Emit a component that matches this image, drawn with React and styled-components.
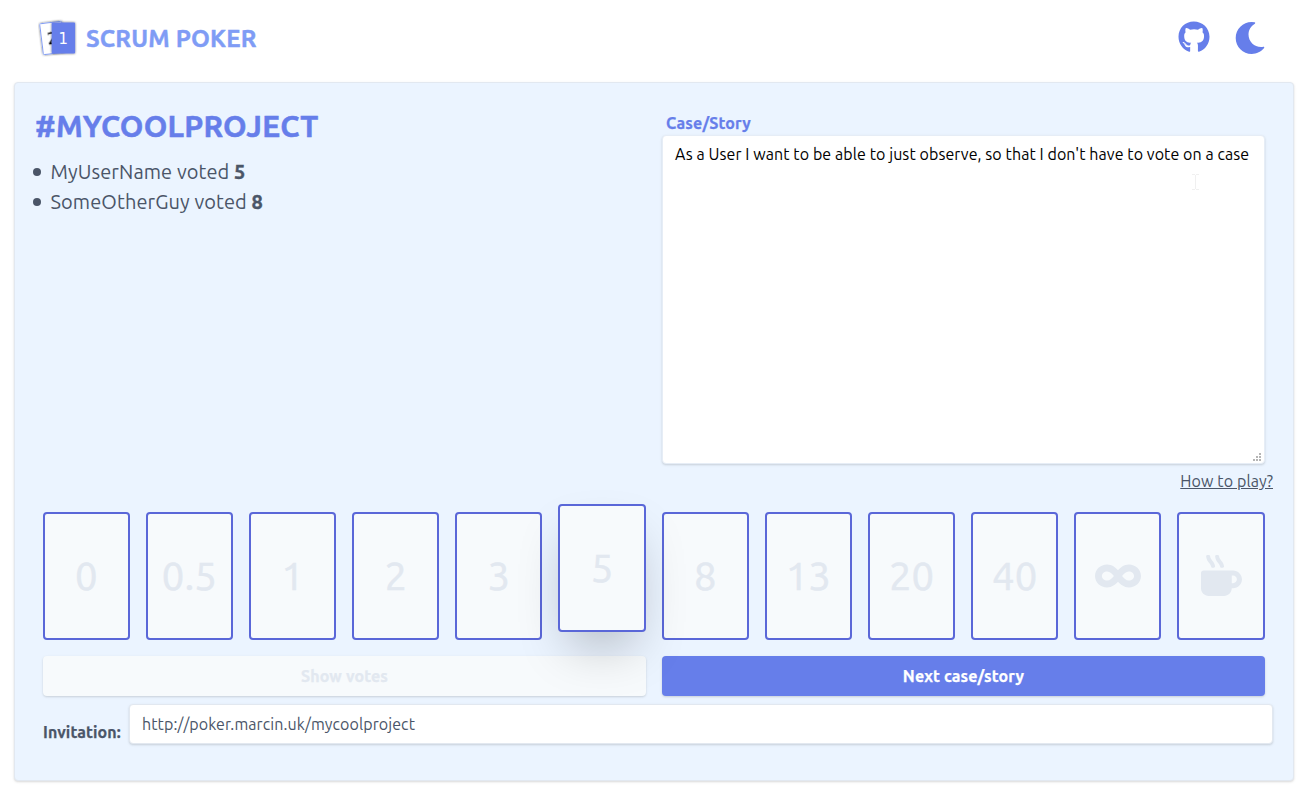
import React from 'react';
import styled, { createGlobalStyle } from 'styled-components';
import { FaGithub, FaMoon, FaInfinity, FaMugHot } from 'react-icons/fa';

const GlobalStyle = createGlobalStyle`
  *, *::before, *::after { box-sizing: border-box; }
  body {
    margin: 0;
    background: #fff;
    color: #4a5568;
    font: 16px/24px Ubuntu, 'Noto Sans', 'Open Sans', sans-serif;
  }
  button, input, textarea { font: inherit; margin: 0; border: 0; outline: 0; }
`;

const shadow = '0 1px 3px 0 rgba(0, 0, 0, 0.1), 0 1px 2px 0 rgba(0, 0, 0, 0.06)';

const Page = styled.div`
  height: 794px;
  padding: 0 10px 13px 14px;
  display: flex;
  flex-direction: column;
`;

const Header = styled.header`
  height: 82px;
  padding: 0 28px 0 24px;
  display: flex;
  align-items: flex-start;
  justify-content: space-between;
`;

const Brand = styled.a`
  display: flex;
  gap: 8px;
  padding-top: 18px;
`;

const Logo = styled.svg`
  width: 40px;
  height: 40px;
`;

const BrandName = styled.span`
  margin-top: 5px;
  color: #7f9cf5;
  font-size: 24px;
  font-weight: 700;
  line-height: 32px;
  letter-spacing: 0.2px;
  -webkit-text-stroke: 0.4px;
`;

const HeaderLinks = styled.nav`
  display: flex;
  gap: 24px;
  padding-top: 21px;
  font-size: 32px;
  color: #667eea;

  svg { display: block; }
  svg + svg { margin-top: 1px; }
`;

const Panel = styled.main`
  flex: 1;
  padding: 20px;
  background: #ebf4ff;
  border: 1px solid #e2e8f0;
  border-radius: 4px;
  box-shadow: ${shadow};
`;

const Board = styled.section`
  height: 361px;
  display: grid;
  grid-template-columns: 1fr 1fr;
`;

const Title = styled.h1`
  margin: 3px 0 11px;
  color: #667eea;
  font-size: 30px;
  font-weight: 700;
  line-height: 40px;
  letter-spacing: 0.25px;
  -webkit-text-stroke: 0.5px;
`;

const Votes = styled.ul`
  margin: 0;
  padding: 0 0 0 15.5px;
  font-size: 20px;
  line-height: 30px;
  letter-spacing: 0.09px;
  list-style: none;
`;

const Vote = styled.li`
  display: flex;
  align-items: center;
  white-space: pre;

  &::before {
    content: '';
    width: 8px;
    height: 8px;
    margin: 0 10px 0 -18px;
    border-radius: 50%;
    background: currentColor;
  }

  b { -webkit-text-stroke: 0.4px; }
`;

const Story = styled.div`
  padding: 8px 8px 0;
  display: flex;
  flex-direction: column;
`;

const StoryLabel = styled.label`
  height: 24px;
  padding-left: 4px;
  color: #667eea;
  font-weight: 700;
  letter-spacing: 0.15px;
  -webkit-text-stroke: 0.25px;
`;

const StoryText = styled.textarea`
  height: 329px;
  padding: 8px 0 0 12px;
  border: 1px solid #e6edf6;
  border-radius: 4px;
  background: #fff;
  box-shadow: ${shadow};
  color: #000;
  line-height: 20px;
  letter-spacing: 0.08px;
  resize: none;
`;

const StoryField = styled.div`
  position: relative;
  display: grid;
`;

const Grip = styled.svg`
  position: absolute;
  right: 4px;
  bottom: 3px;
  width: 8px;
  height: 8px;
  fill: #b5b5b5;
`;

const Caret = styled.svg`
  position: absolute;
  right: 66px;
  top: 39px;
  width: 7px;
  height: 16px;
  stroke: #f0f0f0;
  fill: none;
`;

const Help = styled.div`
  margin-top: 5px;
  height: 43px;
  text-align: right;
`;

const HelpLink = styled.a`
  text-decoration: underline;
  letter-spacing: 0.12px;
`;

const Deck = styled.div`
  display: grid;
  grid-template-columns: repeat(12, 1fr);
  gap: 16px;
  padding: 0 8.4px 0 7.6px;
`;

const Card = styled.button`
  position: relative;
  height: 128px;
  padding: 0;
  display: flex;
  align-items: center;
  justify-content: center;
  border: 2px solid #5a67d8;
  border-radius: 4px;
  background: #f7fafc;
  color: #e2e8f0;
  font-size: 40px;
  -webkit-text-stroke: 0.6px;
  z-index: ${(p) => (p.$picked ? 1 : 0)};
  top: ${(p) => (p.$picked ? '-8px' : '0')};
  box-shadow: ${(p) => (p.$picked ? '0 25px 50px -12px rgba(0, 0, 0, 0.25)' : 'none')};
`;

const CardIcon = styled.span`
  display: flex;
  font-size: ${(p) => p.$size}px;
  margin-top: ${(p) => p.$shift}px;
`;

const Actions = styled.div`
  display: grid;
  grid-template-columns: 1fr 1fr;
  gap: 16px;
  padding: 16px 8px 8px;
`;

const Action = styled.button`
  height: 40px;
  border-radius: 4px;
  background: ${(p) => (p.$primary ? '#667eea' : '#f7fafc')};
  color: ${(p) => (p.$primary ? '#fff' : '#e2e8f0')};
  box-shadow: ${shadow};
  font-weight: 700;
  letter-spacing: 0.14px;
  -webkit-text-stroke: 0.25px;
`;

const Invitation = styled.div`
  display: flex;
  padding-left: 8px;
`;

const InvitationLabel = styled.label`
  width: 86px;
  padding-top: 16px;
  font-weight: 700;
  letter-spacing: 0.1px;
  -webkit-text-stroke: 0.25px;
`;

const InvitationLink = styled.input`
  flex: 1;
  min-width: 0;
  height: 40px;
  padding: 0 12px;
  border: 1px solid #e2e8f0;
  border-radius: 4px;
  background: #fff;
  box-shadow: ${shadow};
  color: #4a5568;
  letter-spacing: 0.08px;
`;

const LogoCards = () => (
  <Logo viewBox="0 0 40 40">
    <defs>
      <filter id="soft" x="-20%" y="-20%" width="140%" height="140%">
        <feDropShadow dx="0" dy="0" stdDeviation="0.9" floodColor="#000" floodOpacity="0.6" />
      </filter>
    </defs>
    <g filter="url(#soft)" transform="rotate(-7 14 20)">
      <rect x="3.5" y="4.5" width="22" height="31" rx="1" fill="#fff" stroke="#7f9cf5" strokeWidth="1" />
      <text x="9.4" y="26" fontFamily="DejaVu Sans Condensed" fontSize="16" fill="#000" stroke="#000" strokeWidth="0.5">2</text>
    </g>
    <g filter="url(#soft)">
      <rect x="13.7" y="4.5" width="23.4" height="31" rx="1" fill="#667eea" />
    </g>
    <text x="20.5" y="26" fontFamily="DejaVu Sans Condensed" fontSize="16.5" fill="#fff">1</text>
  </Logo>
);

const cards = [
  '0', '0.5', '1', '2', '3', '5', '8', '13', '20', '40',
  <CardIcon key="inf" $size={46} $shift={-1}><FaInfinity /></CardIcon>,
  <CardIcon key="mug" $size={41} $shift={-1}><FaMugHot /></CardIcon>,
];

const votes = [
  { name: 'MyUserName', value: 5 },
  { name: 'SomeOtherGuy', value: 8 },
];

const gripDots = [[6, 0], [3, 3], [6, 3], [0, 6], [3, 6], [6, 6]];

export default function App() {
  return (
    <Page>
      <GlobalStyle />
      <Header>
        <Brand>
          <LogoCards />
          <BrandName>SCRUM POKER</BrandName>
        </Brand>
        <HeaderLinks>
          <FaGithub />
          <FaMoon />
        </HeaderLinks>
      </Header>
      <Panel>
        <Board>
          <div>
            <Title>#MYCOOLPROJECT</Title>
            <Votes>
              {votes.map((v) => (
                <Vote key={v.name}>{v.name} voted <b>{v.value}</b></Vote>
              ))}
            </Votes>
          </div>
          <Story>
            <StoryLabel>Case/Story</StoryLabel>
            <StoryField>
              <StoryText readOnly value="As a User I want to be able to just observe, so that I don't have to vote on a case" />
              <Grip viewBox="0 0 8 8">
                {gripDots.map(([x, y]) => <rect key={`${x}-${y}`} x={x} y={y} width="2" height="2" />)}
              </Grip>
              <Caret viewBox="0 0 7 16"><path d="M0 .5h3M4 .5h3M3.5 1v14M0 15.5h3M4 15.5h3" /></Caret>
            </StoryField>
          </Story>
        </Board>
        <Help><HelpLink>How to play?</HelpLink></Help>
        <Deck>
          {cards.map((face, i) => <Card key={i} $picked={i === 5}>{face}</Card>)}
        </Deck>
        <Actions>
          <Action>Show votes</Action>
          <Action $primary>Next case/story</Action>
        </Actions>
        <Invitation>
          <InvitationLabel>Invitation:</InvitationLabel>
          <InvitationLink readOnly value="http://poker.marcin.uk/mycoolproject" />
        </Invitation>
      </Panel>
    </Page>
  );
}
